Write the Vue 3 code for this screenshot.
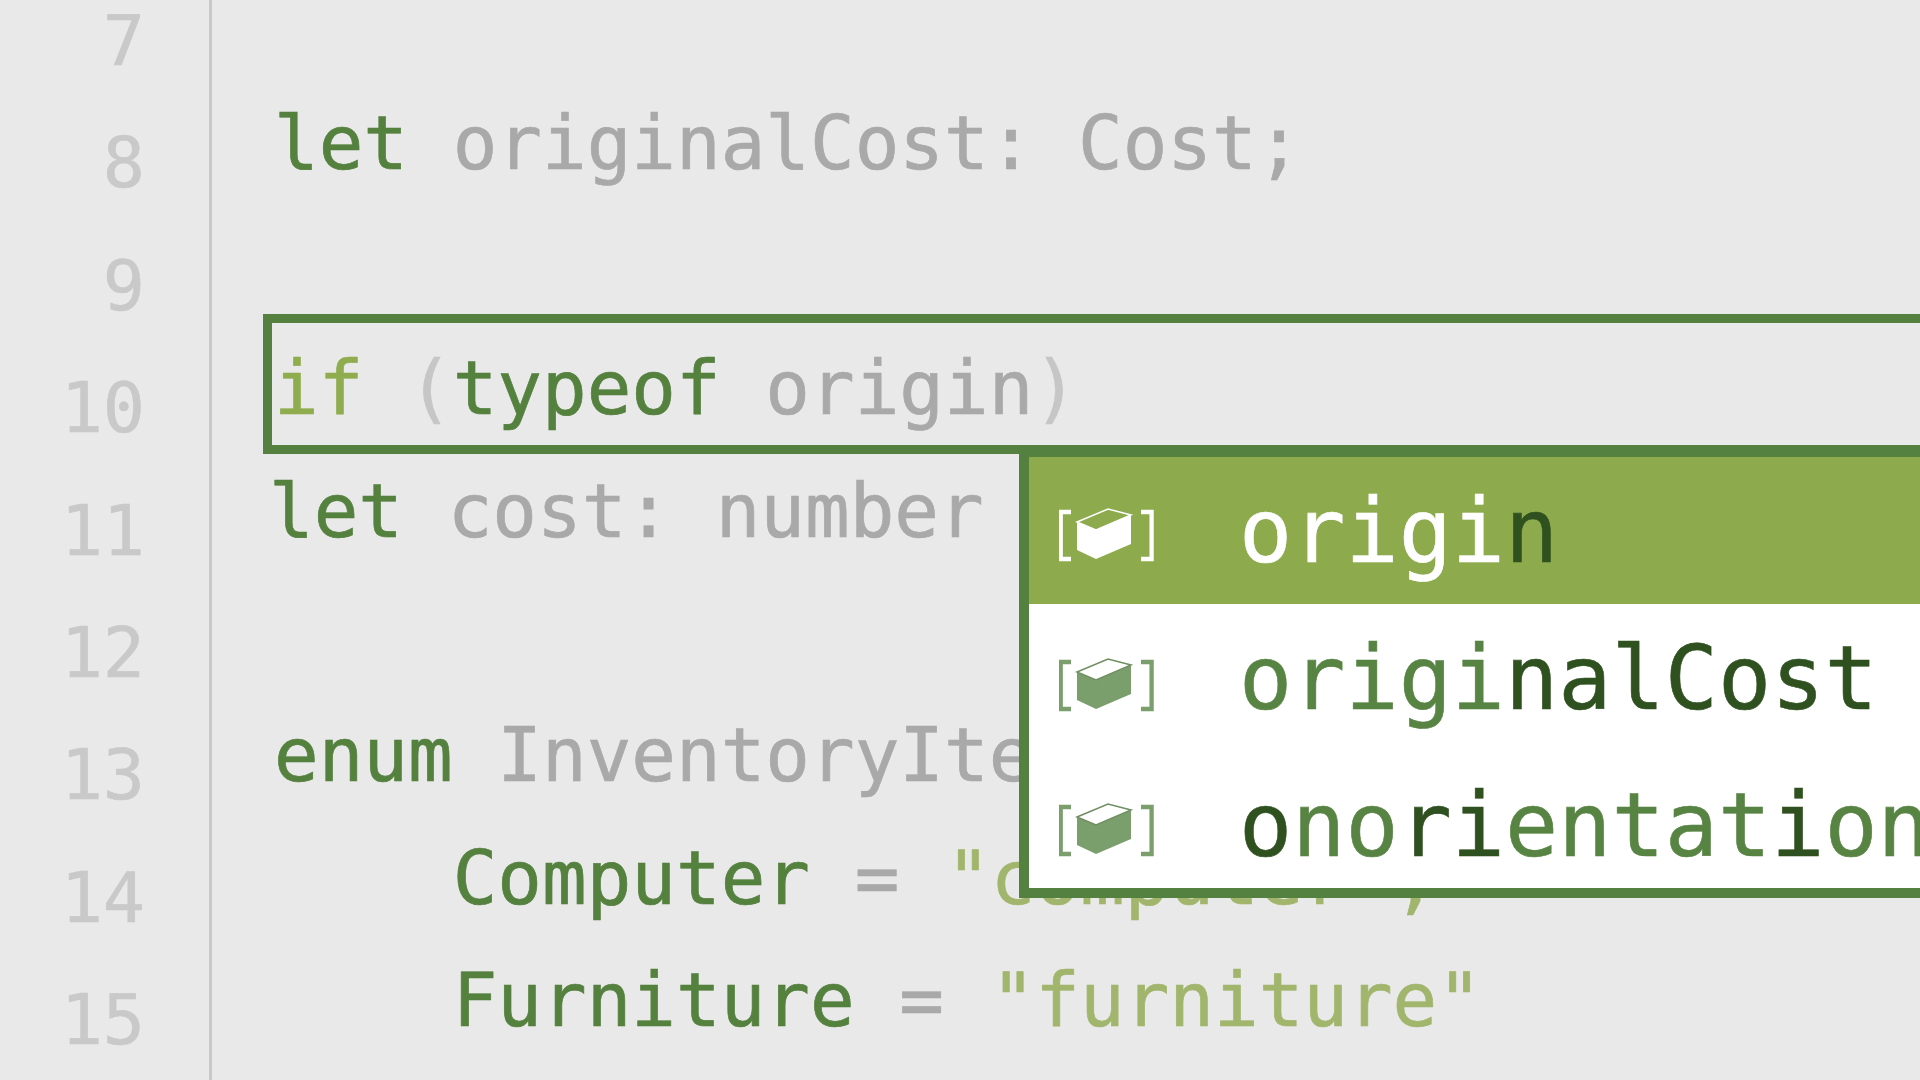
<script setup>
const lines = [
  { n: 7, parts: [] },
  { n: 8, parts: [['k', 'let'], ['g', ' originalCost: Cost;']] },
  { n: 9, parts: [] },
  { n: 10, parts: [['i', 'if'], ['p', ' ('], ['k', 'typeof'], ['g', ' origin'], ['p', ')']] },
  { n: 11, parts: [['k', 'let'], ['g', ' cost: number']], nudge: true },
  { n: 12, parts: [] },
  { n: 13, parts: [['k', 'enum'], ['g', ' InventoryItem {']] },
  { n: 14, parts: [['k', '    Computer'], ['g', ' = '], ['s', '"computer",']] },
  { n: 15, parts: [['k', '    Furniture'], ['g', ' = '], ['s', '"furniture"']] }
]
const items = [
  { parts: [['w', 'origi'], ['d', 'n']], selected: true },
  { parts: [['m', 'origi'], ['d', 'nalCost']] },
  { parts: [['d', 'o'], ['m', 'no'], ['d', 'ri'], ['m', 'entat'], ['d', 'i'], ['m', 'on']] }
]
</script>

<template>
  <div class="editor">
    <div class="gutter">
      <div v-for="l in lines" :key="l.n" class="num">{{ l.n }}</div>
    </div>
    <div class="code">
      <div v-for="l in lines" :key="l.n" class="line" :class="{ nudge: l.nudge }">
        <span v-for="(p, i) in l.parts" :key="i" :class="p[0]">{{ p[1] }}</span>
      </div>
      <div class="current"></div>
    </div>
    <div class="popup">
      <div v-for="(it, r) in items" :key="r" class="item" :class="{ selected: it.selected }">
        <svg class="icon" viewBox="0 0 95 56" width="95" height="56" fill="none">
          <path class="br" d="M12 4H1.7V51H12M82 4H92.6V51H82" />
          <path class="side" d="M18 14L37 22L72 7V36L37 51L18 42Z" />
          <path class="top" d="M18 14L49 1L72 7L37 22Z" />
        </svg>
        <span class="label"><span v-for="(p, i) in it.parts" :key="i" :class="p[0]">{{ p[1] }}</span></span>
      </div>
    </div>
  </div>
</template>

<style>
html, body { margin: 0; background: #e9e9e9; overflow: hidden; }
</style>

<style scoped>
.editor {
  position: relative;
  display: flex;
  width: 1920px;
  height: 1080px;
  overflow: hidden;
  background: #e9e9e9;
  font-family: "DejaVu Sans Mono", monospace;
}
.gutter {
  width: 212px;
  flex: none;
  box-sizing: border-box;
  margin-top: -20px;
  padding-right: 64px;
  height: 1120px;
  border-right: 3px solid #c8c8c8;
  text-align: right;
  font-size: 70px;
  color: #c9c9c9;
  -webkit-text-stroke: 0.6px #c9c9c9;
}
.num { height: 122.4px; line-height: 122.4px; }
.code {
  position: relative;
  flex: 1;
  margin-top: -40px;
  padding-left: 62px;
  font-size: 74.2px;
  white-space: pre;
  -webkit-text-stroke: 0.7px currentColor;
}
.line { height: 122.4px; line-height: 122.4px; }
.nudge { margin-left: -5px; }
.k { color: #55813f; }
.g { color: #a9a9a9; }
.p { color: #c6c6c6; }
.i { color: #8fad4e; }
.s { color: #a1b66c; margin-left: 2px; }
.current {
  position: absolute;
  left: 51px;
  right: -20px;
  top: 354px;
  height: 122px;
  border: 9px solid #548040;
}
.popup {
  position: absolute;
  left: 1019px;
  right: -20px;
  top: 447px;
  height: 431px;
  border: 10px solid #548040;
  background: #fff;
  font-size: 88.4px;
  -webkit-text-stroke: 0.6px currentColor;
}
.item {
  display: flex;
  align-items: center;
  height: 147px;
  box-sizing: border-box;
  padding-left: 30px;
  padding-top: 4px;
  gap: 85px;
}
.item:nth-child(n + 2) { padding-top: 3px; }
.icon { flex: none; position: relative; top: 3px; }
.item:nth-child(2) .icon { top: 7px; }
.item:nth-child(3) .icon { top: 5px; }
.item.selected { background: #8dab4d; }
.label { white-space: pre; line-height: 1; }
.w { color: #fff; }
.m { color: #588443; }
.d { color: #2f5120; }
.br { stroke: #7a9e6c; stroke-width: 4.3; }
.side { fill: #7a9e6c; }
.top { fill: #fff; stroke: #6f8f62; stroke-width: 1.5; }
.selected .br { stroke: #fff; }
.selected .side { fill: #fff; }
.selected .top { fill: #8dab4d; stroke: #fff; }
</style>
